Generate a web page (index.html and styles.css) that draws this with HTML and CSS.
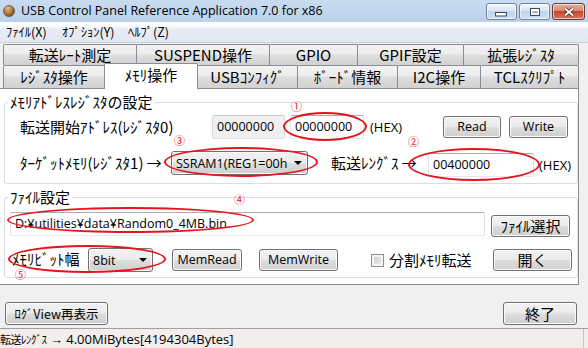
FILE: index.html
```html
<!DOCTYPE html>
<html lang="ja">
<head>
  <meta charset="UTF-8">
  <title>USB Control Panel Reference Application 7.0 for x86</title>
  <link rel="stylesheet" href="styles.css">
</head>
<body>
<div class="window">

  <div class="titlebar">
    <svg class="app-icon" viewBox="0 0 12 12">
      <defs>
        <radialGradient id="ball" cx="0.4" cy="0.35" r="0.7">
          <stop offset="0" stop-color="#f7dcb0"/>
          <stop offset="0.5" stop-color="#c98a4b"/>
          <stop offset="1" stop-color="#6b3a16"/>
        </radialGradient>
      </defs>
      <circle cx="6" cy="6" r="5.5" fill="url(#ball)" stroke="#5a3215" stroke-width="0.6"/>
      <path d="M1.2 4.3h9.6M0.7 6.2h10.6M1.2 8.1h9.6" stroke="#8a4f22" stroke-width="0.7" opacity="0.7"/>
    </svg>
    <span class="title">USB Control Panel Reference Application 7.0 for x86</span>
    <div class="win-buttons">
      <span class="win-btn">
        <svg width="13" height="6" viewBox="0 0 13 6"><rect x="0.5" y="1.5" width="11" height="3.5" fill="#fff" stroke="#3b4a60"/></svg>
      </span>
      <span class="win-btn">
        <svg width="12" height="10" viewBox="0 0 12 10"><rect x="1.5" y="1.5" width="9" height="7" fill="#fff" stroke="#3b4a60"/><rect x="3.5" y="4" width="5" height="2.5" fill="#9fb4cf"/></svg>
      </span>
      <span class="win-btn close">
        <svg width="14" height="10" viewBox="0 0 14 10"><path d="M3 1.5l4 3.5 4-3.5M3 8.5l4-3.5 4 3.5" fill="none" stroke="#4a1f18" stroke-width="3.4"/><path d="M3 1.5l4 3.5 4-3.5M3 8.5l4-3.5 4 3.5" fill="none" stroke="#fff" stroke-width="1.8"/></svg>
      </span>
    </div>
  </div>

  <div class="menubar">
    <span class="menu m1">ﾌｧｲﾙ(X)</span>
    <span class="menu m2">ｵﾌﾟｼｮﾝ(Y)</span>
    <span class="menu">ﾍﾙﾌﾟ(Z)</span>
  </div>

  <div class="tabstrip">
    <div class="tab-row back">
      <div class="tab b1">転送ﾚｰﾄ測定</div>
      <div class="tab b2">SUSPEND操作</div>
      <div class="tab b3">GPIO</div>
      <div class="tab b4">GPIF設定</div>
      <div class="tab b5">拡張ﾚｼﾞｽﾀ</div>
    </div>
    <div class="tab-row front">
      <div class="tab f1">ﾚｼﾞｽﾀ操作</div>
      <div class="tab f2 active">ﾒﾓﾘ操作</div>
      <div class="tab f3">USBｺﾝﾌｨｸﾞ</div>
      <div class="tab f4">ﾎﾞｰﾄﾞ情報</div>
      <div class="tab f5">I2C操作</div>
      <div class="tab f6">TCLｽｸﾘﾌﾟﾄ</div>
    </div>
  </div>

  <div class="panel">
    <fieldset class="group mem">
      <legend>ﾒﾓﾘｱﾄﾞﾚｽﾚｼﾞｽﾀの設定</legend>
      <div class="row mem-row1">
        <span class="label addr-label">転送開始ｱﾄﾞﾚｽ(ﾚｼﾞｽﾀ0)</span>
        <span class="textbox readonly addr-cur">00000000</span>
        <span class="textbox addr-new">00000000</span>
        <span class="hex addr-hex">(HEX)</span>
        <button class="btn read">Read</button>
        <button class="btn write">Write</button>
      </div>
      <div class="row mem-row2">
        <span class="label target-label">ﾀｰｹﾞｯﾄﾒﾓﾘ(ﾚｼﾞｽﾀ1) →</span>
        <span class="combo target-combo"><span class="value">SSRAM1(REG1=00h</span><span class="arrow"></span></span>
        <span class="label len-label">転送ﾚﾝｸﾞｽ →</span>
        <span class="textbox len-box">00400000</span>
        <span class="hex len-hex">(HEX)</span>
      </div>
    </fieldset>

    <fieldset class="group file">
      <legend>ﾌｧｲﾙ設定</legend>
      <div class="row file-row1">
        <span class="textbox path-box">D:¥utilities¥data¥Random0_4MB.bin</span>
        <button class="btn jp browse">ﾌｧｲﾙ選択</button>
      </div>
      <div class="row file-row2">
        <span class="label width-label">ﾒﾓﾘﾋﾞｯﾄ幅</span>
        <span class="combo width-combo"><span class="value">8bit</span><span class="arrow"></span></span>
        <button class="btn memread">MemRead</button>
        <button class="btn memwrite">MemWrite</button>
        <span class="check"></span>
        <span class="label split-label">分割ﾒﾓﾘ転送</span>
        <button class="btn jp open">開く</button>
      </div>
    </fieldset>
  </div>

  <div class="footer">
    <button class="btn jp log-btn">ﾛｸﾞView再表示</button>
    <button class="btn jp exit-btn">終了</button>
  </div>

  <div class="statusbar">
    <span class="status-text"><span class="status-jp">転送ﾚﾝｸﾞｽ</span> → 4.00MiBytes[4194304Bytes]</span>
    <span class="grip"></span>
  </div>

  <!-- red annotations drawn over the dialog -->
  <span class="ring r1"></span>
  <span class="ring r2"></span>
  <span class="ring r3"></span>
  <span class="ring r4"></span>
  <span class="ring r5"></span>
  <span class="mark k1">①</span>
  <span class="mark k2">②</span>
  <span class="mark k3">③</span>
  <span class="mark k4">④</span>
  <span class="mark k5">⑤</span>
</div>
</body>
</html>
```

FILE: styles.css
```css
* {
  margin: 0;
  padding: 0;
  box-sizing: border-box;
}

body {
  width: 588px;
  height: 348px;
  overflow: hidden;
  background: #f0f0f0;
  font-family: "Noto Sans CJK JP", sans-serif;
  font-size: 15px;
  color: #000;
}

.window {
  position: relative;
  height: 348px;
  display: flex;
  flex-direction: column;
}

.window > * {
  flex-shrink: 0;
}

/* Title bar */
.titlebar {
  height: 22px;
  display: flex;
  align-items: center;
  padding-left: 3px;
  background: linear-gradient(#c8dbf1, #bbd1ec);
}

.app-icon {
  width: 12px;
  height: 12px;
  margin-right: 6px;
}

.title {
  flex: 1;
  font-family: "Open Sans", sans-serif;
  font-size: 12.5px;
  line-height: 22px;
  white-space: nowrap;
}

.win-buttons {
  display: flex;
  gap: 2px;
  align-self: flex-start;
  margin: 3px 3px 0 0;
}

.win-btn {
  width: 31px;
  height: 17px;
  display: flex;
  align-items: center;
  justify-content: center;
  border: 1px solid #74849c;
  border-radius: 3px;
  background: linear-gradient(#f1f6fc, #d9e5f3 45%, #c2d5eb 50%, #cfdff1);
  box-shadow: inset 0 0 0 1px rgba(255, 255, 255, 0.6);
}

.win-btn:first-child svg {
  margin-top: 5px;
}

.win-btn.close {
  width: 33px;
  border-color: #6e3b35;
  background: linear-gradient(#e9b1a2, #d98a75 45%, #c5472d 50%, #d6765c);
}

/* Menu bar */
.menubar {
  height: 21px;
  display: flex;
  align-items: center;
  padding-left: 6px;
  font-size: 12.5px;
  line-height: 16px;
  background: linear-gradient(#fdfdfe 0, #fbfcfd 20%, #e8ecf6 35%, #e3e8f3);
  border-bottom: 1px solid #cbd0da;
}

.menu.m1 {
  width: 56px;
}

.menu.m2 {
  width: 66px;
}

/* Tabs */
.tabstrip {
  margin-top: 1px;
  padding-left: 3px;
}

.tab-row {
  display: flex;
}

.tab-row.back {
  height: 21px;
}

.tab-row.front {
  height: 23px;
}

.tab {
  margin-right: -1px;
  border: 1px solid #898c95;
  border-bottom: none;
  border-radius: 2px 2px 0 0;
  background: linear-gradient(#f3f3f3, #ececec 45%, #dedede 50%, #d2d2d2);
  text-align: center;
  white-space: nowrap;
  line-height: 20px;
}

.tab-row.front .tab {
  line-height: 22px;
}

.b1 { width: 134px; }
.b2 { width: 134px; }
.b3 { width: 89px; }
.b4 { width: 107px; }
.b5 { width: 116px; }

.f1 { width: 102px; }
.f2 { width: 94px; }
.f3 { width: 101px; }
.f4 { width: 101px; }
.f5 { width: 84px; }
.f6 { width: 99px; }

.tab.active {
  position: relative;
  z-index: 1;
  height: 26px;
  margin-top: -2px;
  background: #fff;
  line-height: 21px;
}

/* Tab page */
.panel {
  height: 197px;
  margin-right: 9px;
  padding: 5px 0 0 4px;
  background: #fff;
  border: 1px solid #898c95;
  border-left: none;
}

.group {
  width: 574px;
  border: 1px solid #d5dfe5;
  border-radius: 3px;
}

.group legend {
  margin-left: 3px;
  padding: 0 2px;
  line-height: 16px;
}

.group.mem {
  height: 90px;
}

.group.file {
  height: 89px;
  margin-top: 5px;
}

.row {
  display: flex;
  align-items: center;
  height: 24px;
  white-space: nowrap;
}

.label {
  line-height: 16px;
}

.mem-row1 {
  margin-top: 5px;
  padding-left: 15px;
}

.mem-row2 {
  margin-top: 12px;
  padding-left: 15px;
}

.addr-label { width: 192px; }
.addr-cur { width: 73px; }
.addr-new { width: 74px; margin-left: 5px; }
.addr-hex { width: 73px; margin-left: 6px; }
.read { width: 58px; }
.write { width: 59px; margin-left: 8px; }

.target-label { width: 151px; }
.target-combo { width: 137px; }
.len-label { width: 97px; margin-left: 23px; }
.len-box { width: 106px; margin-top: 3px; }
.len-hex { margin-left: 5px; margin-top: 3px; }

.file-row1 {
  margin-top: 7px;
  padding-left: 5px;
  align-items: flex-start;
}

.file-row2 {
  margin-top: 12px;
  padding-left: 7px;
}

.path-box { width: 475px; }
.browse { width: 79px; margin-left: 6px; margin-top: 3px; }

.width-label { width: 76px; margin-top: -2px; }
.width-combo { width: 65px; height: 23px; }
.memread { width: 70px; margin-left: 19px; height: 23px; }
.memwrite { width: 79px; margin-left: 17px; height: 23px; }
.split-label { width: 104px; margin-left: 5px; }
.open { width: 79px; height: 23px; }

.hex {
  font-family: "Open Sans", sans-serif;
  font-size: 13px;
}

/* Controls */
.textbox {
  height: 24px;
  padding-left: 4px;
  border: 1px solid;
  border-color: #abadb3 #dbdfe6 #e3e9ef #e2e3ea;
  border-radius: 2px;
  background: #fff;
  font-family: "Open Sans", sans-serif;
  font-size: 12.5px;
  line-height: 22px;
  overflow: hidden;
}

.textbox.readonly {
  background: #f0f0f0;
  border-color: #cdcdcd #dadada #e0e0e0 #dadada;
}

.btn {
  height: 22px;
  border: 1px solid #707070;
  border-radius: 3px;
  background: linear-gradient(#f2f2f2, #ebebeb 48%, #dddddd 52%, #cfcfcf);
  box-shadow: inset 0 0 0 1px #fbfbfb;
  font-family: "Open Sans", sans-serif;
  font-size: 12.5px;
  line-height: 20px;
  text-align: center;
  color: #000;
  white-space: nowrap;
}

.btn.jp {
  font-family: "Noto Sans CJK JP", sans-serif;
  font-size: 15px;
}

.combo {
  height: 24px;
  display: flex;
  align-items: center;
  padding-left: 4px;
  border: 1px solid #707070;
  border-radius: 3px;
  background: linear-gradient(#f2f2f2, #ebebeb 48%, #dddddd 52%, #cfcfcf);
  box-shadow: inset 0 0 0 1px #fbfbfb;
  font-family: "Open Sans", sans-serif;
  font-size: 12.5px;
  overflow: hidden;
}

.combo .value {
  flex: 1;
  white-space: nowrap;
}

.combo .arrow {
  width: 18px;
  height: 100%;
  display: flex;
  align-items: center;
  justify-content: center;
}

.combo .arrow::after {
  content: "";
  border-left: 4px solid transparent;
  border-right: 4px solid transparent;
  border-top: 4px solid #000;
}

.check {
  width: 13px;
  height: 13px;
  margin-left: 33px;
  border: 1px solid #8e8f8f;
  background: linear-gradient(135deg, #c9ccd2, #eeeeee);
  box-shadow: inset 0 0 0 2px #f4f4f4;
}

/* Bottom buttons */
.footer {
  display: flex;
  justify-content: space-between;
  height: 23px;
  margin-top: 17px;
  padding: 0 11px 0 5px;
}

.footer .btn {
  height: 23px;
}

.log-btn {
  width: 103px;
  font-size: 12.5px !important;
}

.exit-btn { width: 74px; }

/* Status bar */
.statusbar {
  height: 20px;
  margin-top: 3px;
  display: flex;
  align-items: center;
  border-top: 1px solid #a0a0a0;
  background: #f1eeed;
}

.status-text {
  flex: 1;
  font-family: "Open Sans", sans-serif;
  font-size: 13px;
  white-space: nowrap;
}

.status-jp {
  font-family: "Noto Sans CJK JP", sans-serif;
  font-size: 11px;
  letter-spacing: -0.5px;
}

.grip {
  width: 5px;
  height: 100%;
  border-left: 1px solid #c8c4c2;
}

/* Annotations */
.ring {
  position: absolute;
  border: 2px solid #e8141b;
  border-radius: 50%;
}

.r1 { left: 283px; top: 112px; width: 84px; height: 29px; }
.r2 { left: 408px; top: 148px; width: 132px; height: 33px; }
.r3 { left: 164px; top: 147px; width: 154px; height: 30px; }
.r4 { left: 7px; top: 207px; width: 247px; height: 26px; }
.r5 { left: 8px; top: 245px; width: 158px; height: 28px; }

.mark {
  position: absolute;
  color: #e8141b;
  font-size: 11px;
  line-height: 11px;
}

.k1 { left: 291px; top: 101px; }
.k2 { left: 408px; top: 136px; }
.k3 { left: 174px; top: 135px; }
.k4 { left: 234px; top: 194px; }
.k5 { left: 15px; top: 269px; }
```
